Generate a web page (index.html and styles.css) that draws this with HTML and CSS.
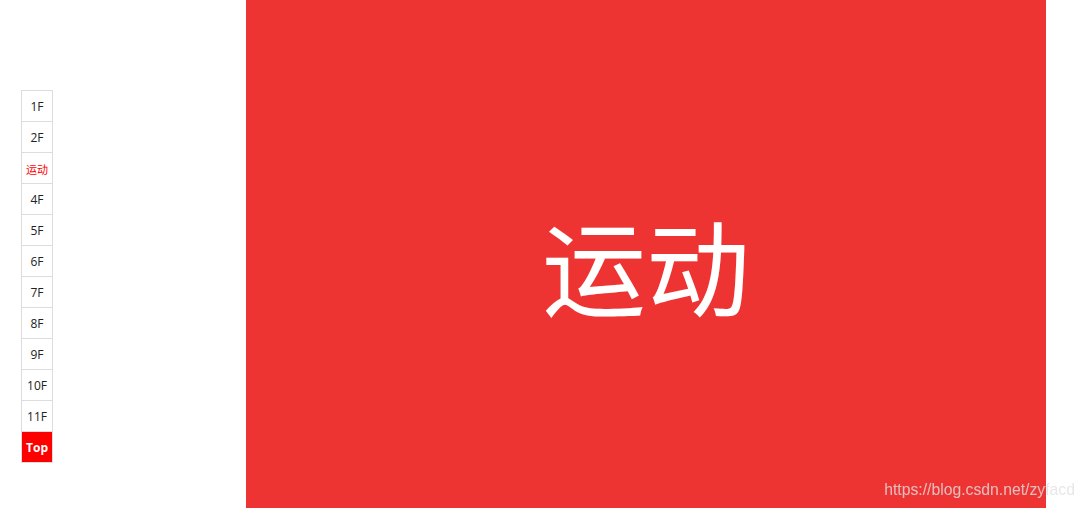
FILE: index.html
```html
<!DOCTYPE html>
<html lang="zh">
<head>
<meta charset="utf-8">
<title>楼层</title>
<link rel="stylesheet" href="styles.css">
</head>
<body>
<div class="floor">
  <div class="floor-title">运动</div>
</div>
<ul class="nav">
  <li class="item">1F</li>
  <li class="item">2F</li>
  <li class="item active">运动</li>
  <li class="item">4F</li>
  <li class="item">5F</li>
  <li class="item">6F</li>
  <li class="item">7F</li>
  <li class="item">8F</li>
  <li class="item">9F</li>
  <li class="item">10F</li>
  <li class="item">11F</li>
  <li class="item top">Top</li>
</ul>
<div class="watermark">https://blog.csdn.net/zyfacd</div>
</body>
</html>
```
FILE: styles.css
```css
html, body {
  margin: 0;
  padding: 0;
  background: #fff;
  overflow: hidden;
  height: 100%;
}
body {
  font-family: "Open Sans", "Noto Sans CJK SC", sans-serif;
}
.floor {
  width: 800px;
  height: 508px;
  margin-left: 246px;
  background: #ee3333;
  display: flex;
  align-items: center;
  justify-content: center;
}
.floor-title {
  color: #fff;
  font-family: "Noto Sans CJK SC", sans-serif;
  font-size: 104px;
  line-height: 1;
  font-weight: 400;
  transform: translateY(10px);
}
.nav {
  position: fixed;
  left: 21px;
  top: 90px;
  margin: 0;
  padding: 0;
  list-style: none;
  border-top: 1px solid #dddddd;
}
.item {
  width: 30px;
  height: 29px;
  padding-top: 1px;
  border: 1px solid #dddddd;
  border-top: none;
  font-size: 12px;
  line-height: 30px;
  text-align: center;
  color: #222;
  background: #fff;
}
.item.active {
  color: #ff0000;
  font-family: "Noto Sans CJK SC", sans-serif;
  font-size: 11px;
}
.item.top {
  background: #ff0000;
  color: #fff;
  font-weight: bold;
}
.watermark {
  position: fixed;
  right: 9px;
  bottom: 9px;
  font-family: "Liberation Sans", Arial, sans-serif;
  font-size: 15.75px;
  color: rgba(225, 225, 225, 0.8);
}
```
